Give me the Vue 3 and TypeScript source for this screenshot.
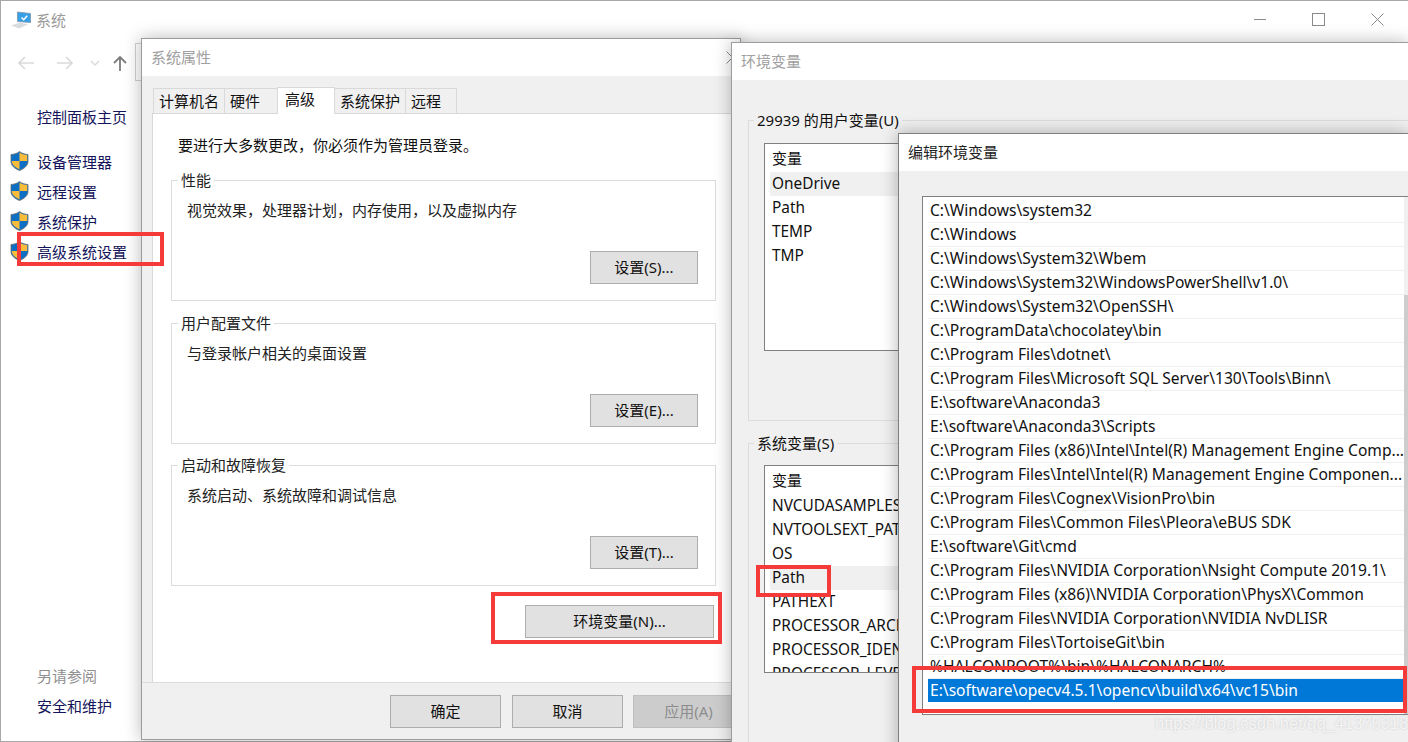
<script setup lang="ts">
const userVars: string[] = ['OneDrive', 'Path', 'TEMP', 'TMP']
const sysVars: string[] = ['NVCUDASAMPLES_ROOT', 'NVTOOLSEXT_PATH', 'OS', 'Path', 'PATHEXT', 'PROCESSOR_ARCHITECTURE', 'PROCESSOR_IDENTIFIER', 'PROCESSOR_LEVEL']
const tabs: { t: string; w: number }[] = [
  { t: '计算机名', w: 72 },
  { t: '硬件', w: 54 },
  { t: '高级', w: 58 },
  { t: '系统保护', w: 72 },
  { t: '远程', w: 52 },
]
const links: string[] = ['设备管理器', '远程设置', '系统保护', '高级系统设置']
const paths: string[] = [
  'C:\\Windows\\system32',
  'C:\\Windows',
  'C:\\Windows\\System32\\Wbem',
  'C:\\Windows\\System32\\WindowsPowerShell\\v1.0\\',
  'C:\\Windows\\System32\\OpenSSH\\',
  'C:\\ProgramData\\chocolatey\\bin',
  'C:\\Program Files\\dotnet\\',
  'C:\\Program Files\\Microsoft SQL Server\\130\\Tools\\Binn\\',
  'E:\\software\\Anaconda3',
  'E:\\software\\Anaconda3\\Scripts',
  'C:\\Program Files (x86)\\Intel\\Intel(R) Management Engine Comp...',
  'C:\\Program Files\\Intel\\Intel(R) Management Engine Componen...',
  'C:\\Program Files\\Cognex\\VisionPro\\bin',
  'C:\\Program Files\\Common Files\\Pleora\\eBUS SDK',
  'E:\\software\\Git\\cmd',
  'C:\\Program Files\\NVIDIA Corporation\\Nsight Compute 2019.1\\',
  'C:\\Program Files (x86)\\NVIDIA Corporation\\PhysX\\Common',
  'C:\\Program Files\\NVIDIA Corporation\\NVIDIA NvDLISR',
  'C:\\Program Files\\TortoiseGit\\bin',
  '%HALCONROOT%\\bin\\%HALCONARCH%',
  'E:\\software\\opecv4.5.1\\opencv\\build\\x64\\vc15\\bin',
]
const groups = [
  { title: '性能', text: '视觉效果，处理器计划，内存使用，以及虚拟内存', btn: '设置(S)...' },
  { title: '用户配置文件', text: '与登录帐户相关的桌面设置', btn: '设置(E)...' },
  { title: '启动和故障恢复', text: '系统启动、系统故障和调试信息', btn: '设置(T)...' },
]
</script>

<template>
  <div class="desk">
    <!-- main control panel window -->
    <section class="win main">
      <header class="main-title">
        <svg class="pc" width="22" height="18" viewBox="0 0 22 18">
          <path d="M1 14.500l9-3 8 2-9 4z" fill="#d9dde0" />
          <path d="M7.500 1l13 1.500v9l-13-1z" fill="#35a0e8" stroke="#7d94a6" stroke-width=".8" />
          <path d="M11.500 6.500l2.200 2.200 3.500-4" fill="none" stroke="#fff" stroke-width="1.500" />
        </svg>
        <span>系统</span>
        <div class="caption">
          <span class="cap-min"></span>
          <span class="cap-max"></span>
          <svg width="13" height="13" viewBox="0 0 13 13"><path d="M.5.500l12 12M12.500.500l-12 12" stroke="#8a8a8a" fill="none" /></svg>
        </div>
      </header>
      <nav class="nav">
        <svg width="116" height="18" viewBox="0 0 116 18">
          <path d="M1 9h15M7 3L1 9l6 6" fill="none" stroke="#dadada" stroke-width="1.600" />
          <path d="M39 9h15M48 3l6 6-6 6" fill="none" stroke="#dadada" stroke-width="1.600" />
          <path d="M73 7l4 4 4-4" fill="none" stroke="#dadada" stroke-width="1.500" />
          <path d="M102 17V3M96 9l6-6 6 6" fill="none" stroke="#7c7c7c" stroke-width="1.800" />
        </svg>
        <i class="crumb"></i>
      </nav>
      <aside class="side">
        <a class="home">控制面板主页</a>
        <div class="links">
          <a v-for="l in links" :key="l" class="link">
            <svg class="shield" width="19" height="20" viewBox="0 0 19 20">
              <path d="M9.500.500c2 1.800 5 2.700 8.500 3v7c0 4-3.500 7-8.500 9C4.500 17.500 1 14.500 1 10.500v-7c3.500-.3 6.500-1.200 8.500-3z" fill="#0d6fc4" stroke="#6a6a6a" stroke-width=".8" />
              <path d="M9.500 1.500c2 1.500 4.500 2.200 7.700 2.600v6H9.500zM9.500 10.100v8.300c-4-1.700-7.600-4.200-7.700-8.300z" fill="#f8bb3a" />
            </svg>
            <span>{{ l }}</span>
          </a>
        </div>
        <div class="see">
          <div class="see-h">另请参阅</div>
          <a class="link-plain">安全和维护</a>
        </div>
      </aside>
    </section>

    <!-- system properties -->
    <section class="win props">
      <header class="dlg-title dim">
        系统属性
        <svg class="props-x" width="13" height="13" viewBox="0 0 13 13"><path d="M.5.500l12 12M12.500.500l-12 12" stroke="#8a8a8a" fill="none" /></svg>
      </header>
      <div class="props-body">
        <div class="tabs">
          <div
            v-for="t in tabs"
            :key="t.t"
            class="tab"
            :class="{ on: t.t === '高级' }"
            :style="{ width: t.w + 'px' }"
          >{{ t.t }}</div>
        </div>
        <div class="panel">
          <p class="note">要进行大多数更改，你必须作为管理员登录。</p>
          <fieldset v-for="g in groups" :key="g.title" class="gb">
            <legend>{{ g.title }}</legend>
            <div class="gb-text">{{ g.text }}</div>
            <div class="gb-foot"><button class="btn set">{{ g.btn }}</button></div>
          </fieldset>
          <div class="env-row"><button class="btn env">环境变量(N)...</button></div>
        </div>
        <footer class="foot">
          <button class="btn act">确定</button>
          <button class="btn act">取消</button>
          <button class="btn act off">应用(A)</button>
        </footer>
      </div>
    </section>

    <!-- environment variables -->
    <section class="win envs">
      <header class="dlg-title dim">环境变量</header>
      <div class="envs-body">
        <fieldset class="gb2 first">
          <legend>29939 的用户变量(U)</legend>
          <div class="vlist u">
            <div class="vrow head">变量</div>
            <div v-for="(v, i) in userVars" :key="v" class="vrow" :class="{ hi: i === 0 }">{{ v }}</div>
          </div>
        </fieldset>
        <fieldset class="gb2 second">
          <legend>系统变量(S)</legend>
          <div class="vlist s">
            <div class="vrow head">变量</div>
            <div v-for="v in sysVars" :key="v" class="vrow" :class="{ hi: v === 'Path' }">{{ v }}</div>
          </div>
        </fieldset>
      </div>
    </section>

    <!-- edit env var -->
    <section class="win edit">
      <header class="dlg-title">编辑环境变量</header>
      <div class="edit-body">
        <div class="plist">
          <div v-for="(p, i) in paths" :key="p" class="prow" :class="{ sel: i === paths.length - 1 }"><span>{{ p }}</span></div>
          <div class="scroll"><i></i></div>
        </div>
      </div>
    </section>

    <!-- red annotations -->
    <i class="mark m1"></i>
    <i class="mark m2"></i>
    <i class="mark m3"></i>
    <i class="mark m4"></i>
    <div class="wm">https://blog.csdn.net/qq_41375318</div>
  </div>
</template>

<style>
html, body { margin: 0; background: #fff; overflow: hidden; }
</style>

<style scoped>
.desk {
  position: relative;
  width: 1408px;
  height: 742px;
  overflow: hidden;
  font-family: "Noto Sans", "Noto Sans CJK SC", sans-serif;
  font-size: 15px;
  color: #111;
  background: #fff;
}
.win { position: absolute; box-sizing: border-box; background: #fff; }
.main {
  left: 0; top: 0; width: 1408px; height: 742px;
  border: 1px solid #a8a8a8;
  border-right: 0;
}
.main-title {
  height: 37px;
  display: flex;
  align-items: center;
  padding-left: 9px;
  color: #9a9a9a;
}
.pc { margin-right: 4px; }
.caption {
  margin-left: auto;
  display: flex;
  align-items: center;
  gap: 46px;
  padding-right: 24px;
  height: 37px;
}
.cap-min { width: 12px; height: 1px; background: #8a8a8a; }
.cap-max { width: 11px; height: 11px; border: 1px solid #8a8a8a; }
.nav { position: relative; height: 42px; padding: 16px 0 0 17px; box-sizing: border-box; }
.crumb { position: absolute; left: 134px; top: 5px; width: 20px; height: 36px; border: 1px solid #d0d0d0; }
.side { padding-left: 36px; color: #14145a; }
.home { display: block; line-height: 30px; margin-top: 22px; }
.links { margin-top: 14px; }
.link { display: flex; align-items: center; height: 30px; margin-left: -27px; }
.shield { margin-right: 8px; flex: none; }
.see { margin-top: 395px; line-height: 30px; }
.see-h { color: #8f8f8f; }

.dlg-title {
  position: relative;
  height: 37px;
  line-height: 36px;
  padding-left: 9px;
  color: #222;
  background: #fff;
}
.dim { color: #a0a0a0; }
.props-x { position: absolute; left: 584px; top: 12px; }

.props {
  left: 141px; top: 38px; width: 600px; height: 702px;
  border: 1px solid #9c9c9c;
  box-shadow: 0 0 16px rgba(0,0,0,.28);
}
.props-body { background: #f0f0f0; height: 663px; padding: 12px 0 0 10px; box-sizing: border-box; display: flex; flex-direction: column; }
.tabs { display: flex; height: 25px; align-items: flex-end; padding-left: 1px; position: relative; z-index: 1; }
.tab {
  height: 25px;
  line-height: 25px;
  box-sizing: border-box;
  border: 1px solid #d9d9d9;
  border-bottom: 0;
  margin-right: -1px;
  padding-left: 5px;
  background: #f0f0f0;
  white-space: nowrap;
}
.tab.on { height: 27px; background: #fff; padding-left: 7px; margin-bottom: -1px; line-height: 22px; position: relative; z-index: 1; }
.panel {
  background: #fff;
  border-top: 1px solid #d9d9d9;
  border-left: 1px solid #d9d9d9;
  height: 569px;
  box-sizing: border-box;
  padding: 21px 0 0 18px;
  flex: none;
}
.note { margin: 0 0 0 7px; height: 21px; line-height: 20px; }
.gb {
  margin: 14px 0 0;
  width: 545px;
  height: 131px;
  box-sizing: border-box;
  border: 1px solid #dcdcdc;
  padding: 0 17px 0 15px;
  display: block;
}
.gb + .gb { margin-top: 12px; }
.gb + .gb + .gb { margin-top: 11px; }
.gb legend { padding: 0 3px; margin-left: -9px; line-height: 20px; color: #222; }
.gb-text { line-height: 20px; margin-top: 10px; color: #222; }
.gb-foot { display: flex; justify-content: flex-end; margin-top: 31px; }
.btn {
  font: inherit;
  color: #111;
  background: #e1e1e1;
  border: 1px solid #adadad;
  padding: 0 0 2px;
  box-sizing: border-box;
}
.set { width: 108px; height: 33px; }
.env-row { display: flex; justify-content: flex-end; width: 545px; padding-right: 2px; box-sizing: border-box; margin-top: 19px; }
.env { width: 189px; height: 33px; }
.foot {
  height: 57px;
  margin-left: -10px;
  border-top: 1px solid #dcdcdc;
  display: flex;
  gap: 11px;
  padding: 12px 0 0 248px;
  box-sizing: border-box;
  flex: none;
}
.act { width: 111px; height: 33px; flex: none; }
.off { color: #8c8c8c; background: #ccc; border-color: #bfbfbf; margin-left: -1px; }

.envs {
  left: 731px; top: 42px; width: 677px; height: 720px;
  border: 1px solid #9c9c9c;
  border-right: 0;
  box-shadow: 0 0 16px rgba(0,0,0,.28);
}
.envs-body { background: #f0f0f0; height: 682px; padding: 30px 0 0 16px; box-sizing: border-box; }
.gb2 { border: 1px solid #dcdcdc; margin: 0; padding: 0 0 0 15px; box-sizing: border-box; width: 700px; display: block; }
.gb2 legend { padding: 0 3px; margin-left: -10px; line-height: 20px; color: #111; }
.first { height: 311px; }
.second { height: 340px; margin-top: 12px; }
.vlist { width: 300px; background: #fff; border: 1px solid #808080; box-sizing: border-box; padding-left: 5px; overflow: hidden; font-size: 15.400px; }
.vlist.u { height: 208px; margin-top: 13px; }
.vlist.s { height: 208px; margin-top: 12px; }
.vrow { height: 24px; line-height: 24px; padding-left: 2px; white-space: nowrap; }
.head { height: 28px; line-height: 28px; font-size: 15px; }
.hi { background: #f0f0f0; }

.edit {
  left: 898px; top: 133px; width: 510px; height: 650px;
  border: 1px solid #7f7f7f;
  border-right: 0;
  box-shadow: 0 0 16px rgba(0,0,0,.3);
}
.edit-body { background: #f0f0f0; height: 612px; padding: 25px 0 0 23px; box-sizing: border-box; }
.plist {
  position: relative;
  height: 519px;
  background: #fff;
  border: 1px solid #808080;
  border-right: 0;
  box-sizing: border-box;
  padding: 2px 0 0 5px;
  font-size: 15.600px;
}
.prow { height: 24px; line-height: 23px; border-bottom: 1px solid #f0f0f0; box-sizing: border-box; padding: 0 0 0 2px; white-space: nowrap; overflow: hidden; margin-right: 4px; color: #111; }
.sel { background: #0078d7; color: #fff; height: 23px; border-bottom: 0; }
.scroll { position: absolute; right: 0; top: 0; bottom: 0; width: 4px; background: #f0f0f0; }
.scroll i { display: block; position: absolute; top: 98px; bottom: 0; left: 0; right: 0; background: #cdcdcd; }

.mark { position: absolute; box-sizing: border-box; border: 4px solid #f53a3a; }
.m1 { left: 17px; top: 232px; width: 147px; height: 34px; }
.m2 { left: 491px; top: 592px; width: 231px; height: 52px; }
.m3 { left: 756px; top: 565px; width: 75px; height: 32px; }
.m4 { left: 912px; top: 666px; width: 495px; height: 47px; }
.wm {
  position: absolute;
  left: 1155px;
  top: 713px;
  font-family: "Liberation Sans", sans-serif;
  font-size: 16.500px;
  line-height: 20px;
  color: rgba(255,255,255,.75);
  text-shadow: 0 0 2px rgba(170,170,170,.6);
  white-space: nowrap;
}
</style>
